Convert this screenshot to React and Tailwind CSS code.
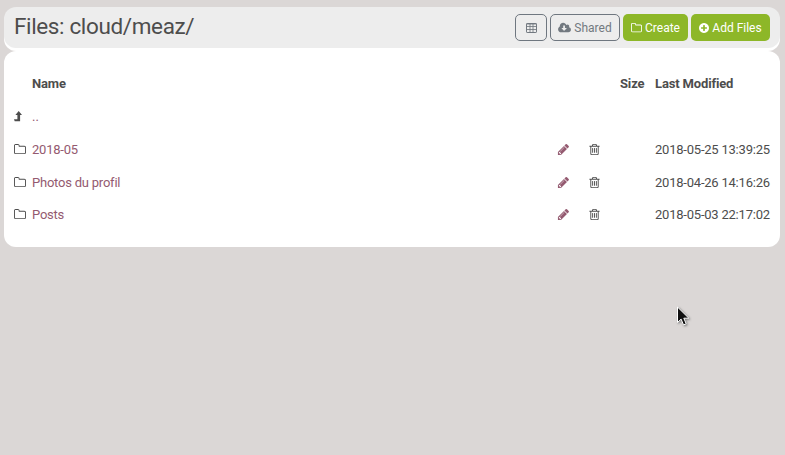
import React from "react";

const paths = {
  folder: "M1600 1312v-704q0-40-28-68t-68-28h-704q-40 0-68-28t-28-68v-64q0-40-28-68t-68-28h-320q-40 0-68 28t-28 68v960q0 40 28 68t68 28h1216q40 0 68-28t28-68zm128-704v704q0 92-66 158t-158 66h-1216q-92 0-158-66t-66-158v-960q0-92 66-158t158-66h320q92 0 158 66t66 158v32h672q92 0 158 66t66 158z",
  trash: "M704 736v576q0 14-9 23t-23 9h-64q-14 0-23-9t-9-23v-576q0-14 9-23t23-9h64q14 0 23 9t9 23zm256 0v576q0 14-9 23t-23 9h-64q-14 0-23-9t-9-23v-576q0-14 9-23t23-9h64q14 0 23 9t9 23zm256 0v576q0 14-9 23t-23 9h-64q-14 0-23-9t-9-23v-576q0-14 9-23t23-9h64q14 0 23 9t9 23zm128 724v-948h-896v948q0 22 7 40.5t14.5 27 10.5 8.5h832q3 0 10.5-8.5t14.5-27 7-40.5zm-672-1076h448l-48-117q-7-9-17-11h-317q-10 2-17 11zm928 32v64q0 14-9 23t-23 9h-96v948q0 83-47 143.5t-113 60.5h-832q-66 0-113-58.5t-47-141.5v-952h-96q-14 0-23-9t-9-23v-64q0-14 9-23t23-9h309l70-167q15-37 54-63t79-26h320q40 0 79 26t54 63l70 167h309q14 0 23 9t9 23z",
  pencil: "M491 1536l91-91-235-235-91 91v107h128v128h107zm523-928q0-22-22-22-10 0-17 7l-542 542q-7 7-7 17 0 22 22 22 10 0 17-7l542-542q7-7 7-17zm-54-192l416 416-832 832h-416v-416zm683 96q0 53-37 90l-166 166-416-416 166-165q36-38 90-38 53 0 91 38l235 234q37 39 37 91z",
  plus: "M1344 960v-128q0-26-19-45t-45-19h-256v-256q0-26-19-45t-45-19h-128q-26 0-45 19t-19 45v256h-256q-26 0-45 19t-19 45v128q0 26 19 45t45 19h256v256q0 26 19 45t45 19h128q26 0 45-19t19-45v-256h256q26 0 45-19t19-45zm320-64q0 209-103 385.5t-279.5 279.5-385.5 103-385.5-103-279.5-279.5-103-385.5 103-385.5 279.5-279.5 385.5-103 385.5 103 279.5 279.5 103 385.5z",
  cloud: "M1216 928q0-14-9-23t-23-9h-224v-352q0-13-9.5-22.5t-22.5-9.5h-192q-13 0-22.5 9.5t-9.5 22.5v352h-224q-13 0-22.5 9.5t-9.5 22.5q0 14 9 23l352 352q9 9 23 9t23-9l351-351q10-12 10-24zm640 224q0 159-112.5 271.5t-271.5 112.5h-1088q-185 0-316.5-131.5t-131.5-316.5q0-130 70-240t188-165q-2-30-2-43 0-212 150-362t362-150q156 0 285.5 87t188.5 231q71-62 166-62 106 0 181 75t75 181q0 76-41 138 130 31 213.5 135.5t83.5 238.5z",
};

function Icon({ name, box = "0 0 1792 1792", className }) {
  return (
    <svg viewBox={box} className={`shrink-0 ${className}`} fill="currentColor" aria-hidden="true">
      <path d={paths[name]} />
    </svg>
  );
}

function TableIcon() {
  return (
    <svg viewBox="0 0 11 10" className="h-[10px] w-[11px]" fill="none" stroke="currentColor" aria-hidden="true">
      <rect x=".5" y=".5" width="10" height="9" rx=".6" />
      <path d="M.5 1h10M.5 3.5h10M.5 6.5h10M4 1v8.5M7 1v8.5" strokeWidth=".85" />
    </svg>
  );
}

function LevelUp() {
  return (
    <svg viewBox="0 0 8 11" className="h-[11px] w-2" fill="currentColor" aria-hidden="true">
      <path d="M4.7 0 8 3.9H6.1V10.2H.7L0 8.2h3.4V3.9H1.4z" />
    </svg>
  );
}

const files = [
  { name: "2018-05", date: "2018-05-25 13:39:25", height: "h-[33px]" },
  { name: "Photos du profil", date: "2018-04-26 14:16:26", height: "h-[33px]" },
  { name: "Posts", date: "2018-05-03 22:17:02", height: "h-[31px]" },
];

const grid = "grid grid-cols-[18px_525px_31px_31px_36px_115px] items-center pl-[10px]";
const outline = "flex h-[27px] items-center justify-center rounded-[5px] border border-[#6f7780] text-[#727980]";
const green = "flex h-[27px] items-center justify-center rounded-[5px] bg-[#8db728] text-white";

export default function App() {
  return (
    <div className="h-[455px] w-[785px] overflow-hidden bg-[#dbd7d6] pl-1 pt-[7px] font-[Roboto,sans-serif] text-[13px] text-[#4d4d4d]">
      <main className="w-[776px]">
        <header className="flex h-[41px] justify-between rounded-[12px] bg-[#ededed] pl-[10px] pr-[10px] shadow-[0_3px_0_0_#ffffff]">
          <h1 className="mt-[2px] whitespace-nowrap text-[22.5px] leading-[34px] tracking-[-0.36px]">Files: cloud/meaz/</h1>
          <div className="mt-[7px] flex gap-[3px] text-[12px]">
            <button className={`${outline} w-8`}><TableIcon /></button>
            <button className={`${outline} w-[70px] gap-[3px]`}>
              <Icon name="cloud" box="-64 0 1920 1792" className="h-3 w-[13px]" />Shared
            </button>
            <button className={`${green} w-[65px] gap-[3px]`}>
              <Icon name="folder" box="64 0 1664 1792" className="h-3 w-[11px]" />Create
            </button>
            <button className={`${green} w-[79px] gap-[3px]`}>
              <Icon name="plus" box="128 0 1536 1792" className="h-3 w-[10px]" />Add Files
            </button>
          </div>
        </header>
        <section className="mt-[3px] h-[196px] rounded-[12px] bg-white pt-4">
          <div className={`${grid} h-[33px] font-bold tracking-[-0.15px]`}>
            <span className="col-start-2">Name</span>
            <span className="col-start-5 ml-px">Size</span>
            <span className="col-start-6">Last Modified</span>
          </div>
          <div className={`${grid} h-[33px]`}>
            <LevelUp />
            <span className="text-[#945a70]">..</span>
          </div>
          {files.map((file) => (
            <div key={file.name} className={`${grid} ${file.height} tracking-[-0.22px]`}>
              <Icon name="folder" box="64 0 1664 1792" className="h-[13px] w-3" />
              <span className="text-[#945a70]">{file.name}</span>
              <Icon name="pencil" className="h-[13px] w-[13px] text-[#945a70]" />
              <Icon name="trash" className="h-[13px] w-[13px]" />
              <span className="col-start-6 whitespace-nowrap">{file.date}</span>
            </div>
          ))}
        </section>
      </main>
      <svg viewBox="0 0 14 21" className="absolute left-[676px] top-[306px] h-[21px] w-[14px] drop-shadow-[1px_1px_1px_#777777]" aria-hidden="true">
        <path d="M1.5 1v15.5l3.6-3.4 2.4 5.8 2.7-1.1-2.4-5.6h5z" fill="#111" stroke="#fff" strokeWidth="1" />
      </svg>
    </div>
  );
}
